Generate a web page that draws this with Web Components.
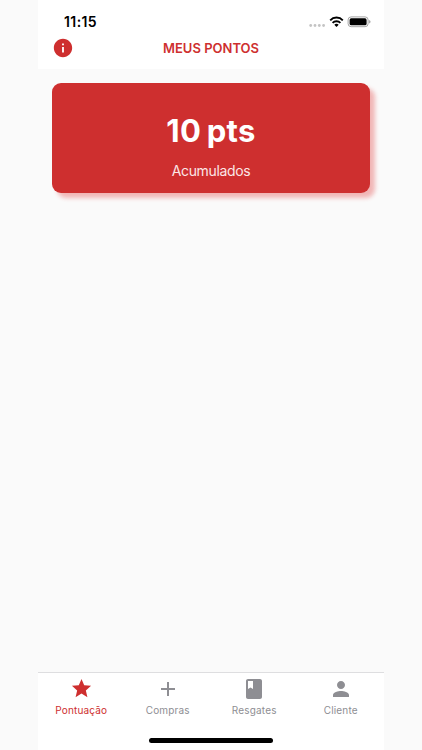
<!DOCTYPE html>
<html lang="pt-BR">
<head>
<meta charset="UTF-8">
<meta name="viewport" content="width=device-width, initial-scale=1.0">
<title>Meus Pontos</title>
<style>
    body{margin:0;background:#fafafa;font-family:Inter, "Liberation Sans", sans-serif;}
</style>
</head>
<body>
<points-app>
    <status-bar slot="top" time="11:15"></status-bar>
    <app-header slot="top">MEUS PONTOS</app-header>
    <points-card points="10 pts">Acumulados</points-card>
    <tab-bar slot="bottom">
        <tab-item icon="star" active>Pontuação</tab-item>
        <tab-item icon="plus">Compras</tab-item>
        <tab-item icon="book">Resgates</tab-item>
        <tab-item icon="person">Cliente</tab-item>
    </tab-bar>
</points-app>
<script>
const icons = {
    star: '<path d="M12 17.27 18.18 21l-1.64-7.03L22 9.24l-7.19-.61L12 2 9.19 8.63 2 9.24l5.46 4.73L5.82 21z"/>',
    plus: '<path d="M19 13h-6v6h-2v-6H5v-2h6V5h2v6h6z"/>',
    book: '<path d="M18 2H6c-1.1 0-2 .9-2 2v16c0 1.1.9 2 2 2h12c1.1 0 2-.9 2-2V4c0-1.1-.9-2-2-2zM6 4h5v8l-2.5-1.5L6 12z"/>',
    person: '<path d="M12 12c2.21 0 4-1.79 4-4s-1.79-4-4-4-4 1.79-4 4 1.79 4 4 4zm0 2c-2.67 0-8 1.34-8 4v2h16v-2c0-2.66-5.33-4-8-4z"/>',
    info: '<path d="M12 2C6.48 2 2 6.48 2 12s4.48 10 10 10 10-4.48 10-10S17.52 2 12 2zm1 15h-2v-6h2zm0-8h-2V7h2z"/>'
};

class PointsApp extends HTMLElement {
    constructor() {
        super();
        this.attachShadow({ mode: 'open' });
    }
    connectedCallback() {
        this.shadowRoot.innerHTML = `
<style>
    :host{display:flex;flex-direction:column;box-sizing:border-box;width:346px;height:100vh;margin:0 0 0 38px;--red:#ce2f2f;--gray:#8e8e93;}
    header{height:69px;background:white;}
    main{flex:1;padding:14px 14px 0;}
</style>
        <header><slot name="top"></slot></header>
        <main><slot></slot></main>
        <slot name="bottom"></slot>
    `;
    }
}

class StatusBar extends HTMLElement {
    constructor() {
        super();
        this.attachShadow({ mode: 'open' });
    }
    connectedCallback() {
        this.shadowRoot.innerHTML = `
<style>
    :host{display:flex;align-items:center;justify-content:space-between;box-sizing:border-box;height:36px;padding:7px 13px 0 26px;color:#000;}
    span{font-size:14px;font-weight:600;line-height:18px;letter-spacing:.4px;}
    svg{display:block;}
</style>
        <span>${this.getAttribute('time')}</span>
        <svg width="62" height="14" viewBox="0 0 62 14">
            <g fill="#c4c4c4"><circle cx="1.7" cy="10.5" r="1.4"/><circle cx="6" cy="10.5" r="1.4"/><circle cx="10.3" cy="10.5" r="1.4"/><circle cx="14.6" cy="10.5" r="1.4"/></g>
            <g fill="none" stroke="#000" stroke-width="1.9"><path d="M21.2 5.3a8.6 8.6 0 0 1 12.6 0"/><path d="M23.6 7.9a5.3 5.3 0 0 1 7.8 0"/></g>
            <path d="M27.5 12 25.3 9.8a3.1 3.1 0 0 1 4.4 0z"/>
            <rect x="39.1" y="1.9" width="20" height="9.8" rx="3" fill="none" stroke="#a5a5a5"/>
            <rect x="40.6" y="3.3" width="17" height="7" rx="1.6"/>
            <path d="M60.2 5.1q1.3.5 1.3 1.7t-1.3 1.7z" fill="#999"/>
        </svg>
    `;
    }
}

class AppHeader extends HTMLElement {
    constructor() {
        super();
        this.attachShadow({ mode: 'open' });
    }
    connectedCallback() {
        this.shadowRoot.innerHTML = `
<style>
    :host{display:grid;grid-template-columns:38px 1fr 38px;align-items:center;height:24px;color:var(--red);}
    svg{width:22px;height:22px;margin-left:14px;fill:currentColor;}
    h1{margin:0;text-align:center;font-size:13px;font-weight:600;line-height:24px;}
</style>
        <svg viewBox="0 0 24 24">${icons.info}</svg>
        <h1><slot></slot></h1>
    `;
    }
}

class PointsCard extends HTMLElement {
    constructor() {
        super();
        this.attachShadow({ mode: 'open' });
    }
    connectedCallback() {
        this.shadowRoot.innerHTML = `
<style>
    :host{display:flex;flex-direction:column;align-items:center;box-sizing:border-box;height:110px;padding-top:28px;border-radius:9px;background:var(--red);color:white;box-shadow:5px 5px 4px rgba(224,47,47,.33);}
    strong{font-size:31px;font-weight:700;line-height:40px;letter-spacing:.3px;word-spacing:-2px;}
    p{margin:10px 0 0;font-size:14px;line-height:20px;letter-spacing:-.35px;color:#fbe6e6;}
</style>
        <strong>${this.getAttribute('points')}</strong>
        <p><slot></slot></p>
    `;
    }
}

class TabBar extends HTMLElement {
    constructor() {
        super();
        this.attachShadow({ mode: 'open' });
    }
    connectedCallback() {
        this.shadowRoot.innerHTML = `
<style>
    :host{display:flex;flex-direction:column;align-items:center;box-sizing:border-box;height:78px;border-top:1px solid #dedee0;background:white;}
    nav{display:flex;width:100%;height:65px;}
    i{width:124px;height:5px;border-radius:3px;background:black;}
</style>
        <nav><slot></slot></nav>
        <i></i>
    `;
    }
}

class TabItem extends HTMLElement {
    constructor() {
        super();
        this.attachShadow({ mode: 'open' });
    }
    connectedCallback() {
        this.shadowRoot.innerHTML = `
<style>
    :host{display:flex;flex:1;flex-direction:column;align-items:center;padding-top:4px;color:var(--gray);font-size:10px;line-height:14px;letter-spacing:.18px;}
    :host([active]){color:var(--red);}
    svg{width:24px;height:24px;margin-bottom:2px;fill:currentColor;}
    :host([active]) svg{width:23px;height:23px;margin-bottom:3px;}
</style>
        <svg viewBox="0 0 24 24">${icons[this.getAttribute('icon')]}</svg>
        <span><slot></slot></span>
    `;
    }
}

customElements.define('points-app', PointsApp);
customElements.define('status-bar', StatusBar);
customElements.define('app-header', AppHeader);
customElements.define('points-card', PointsCard);
customElements.define('tab-bar', TabBar);
customElements.define('tab-item', TabItem);
</script>
</body>
</html>
